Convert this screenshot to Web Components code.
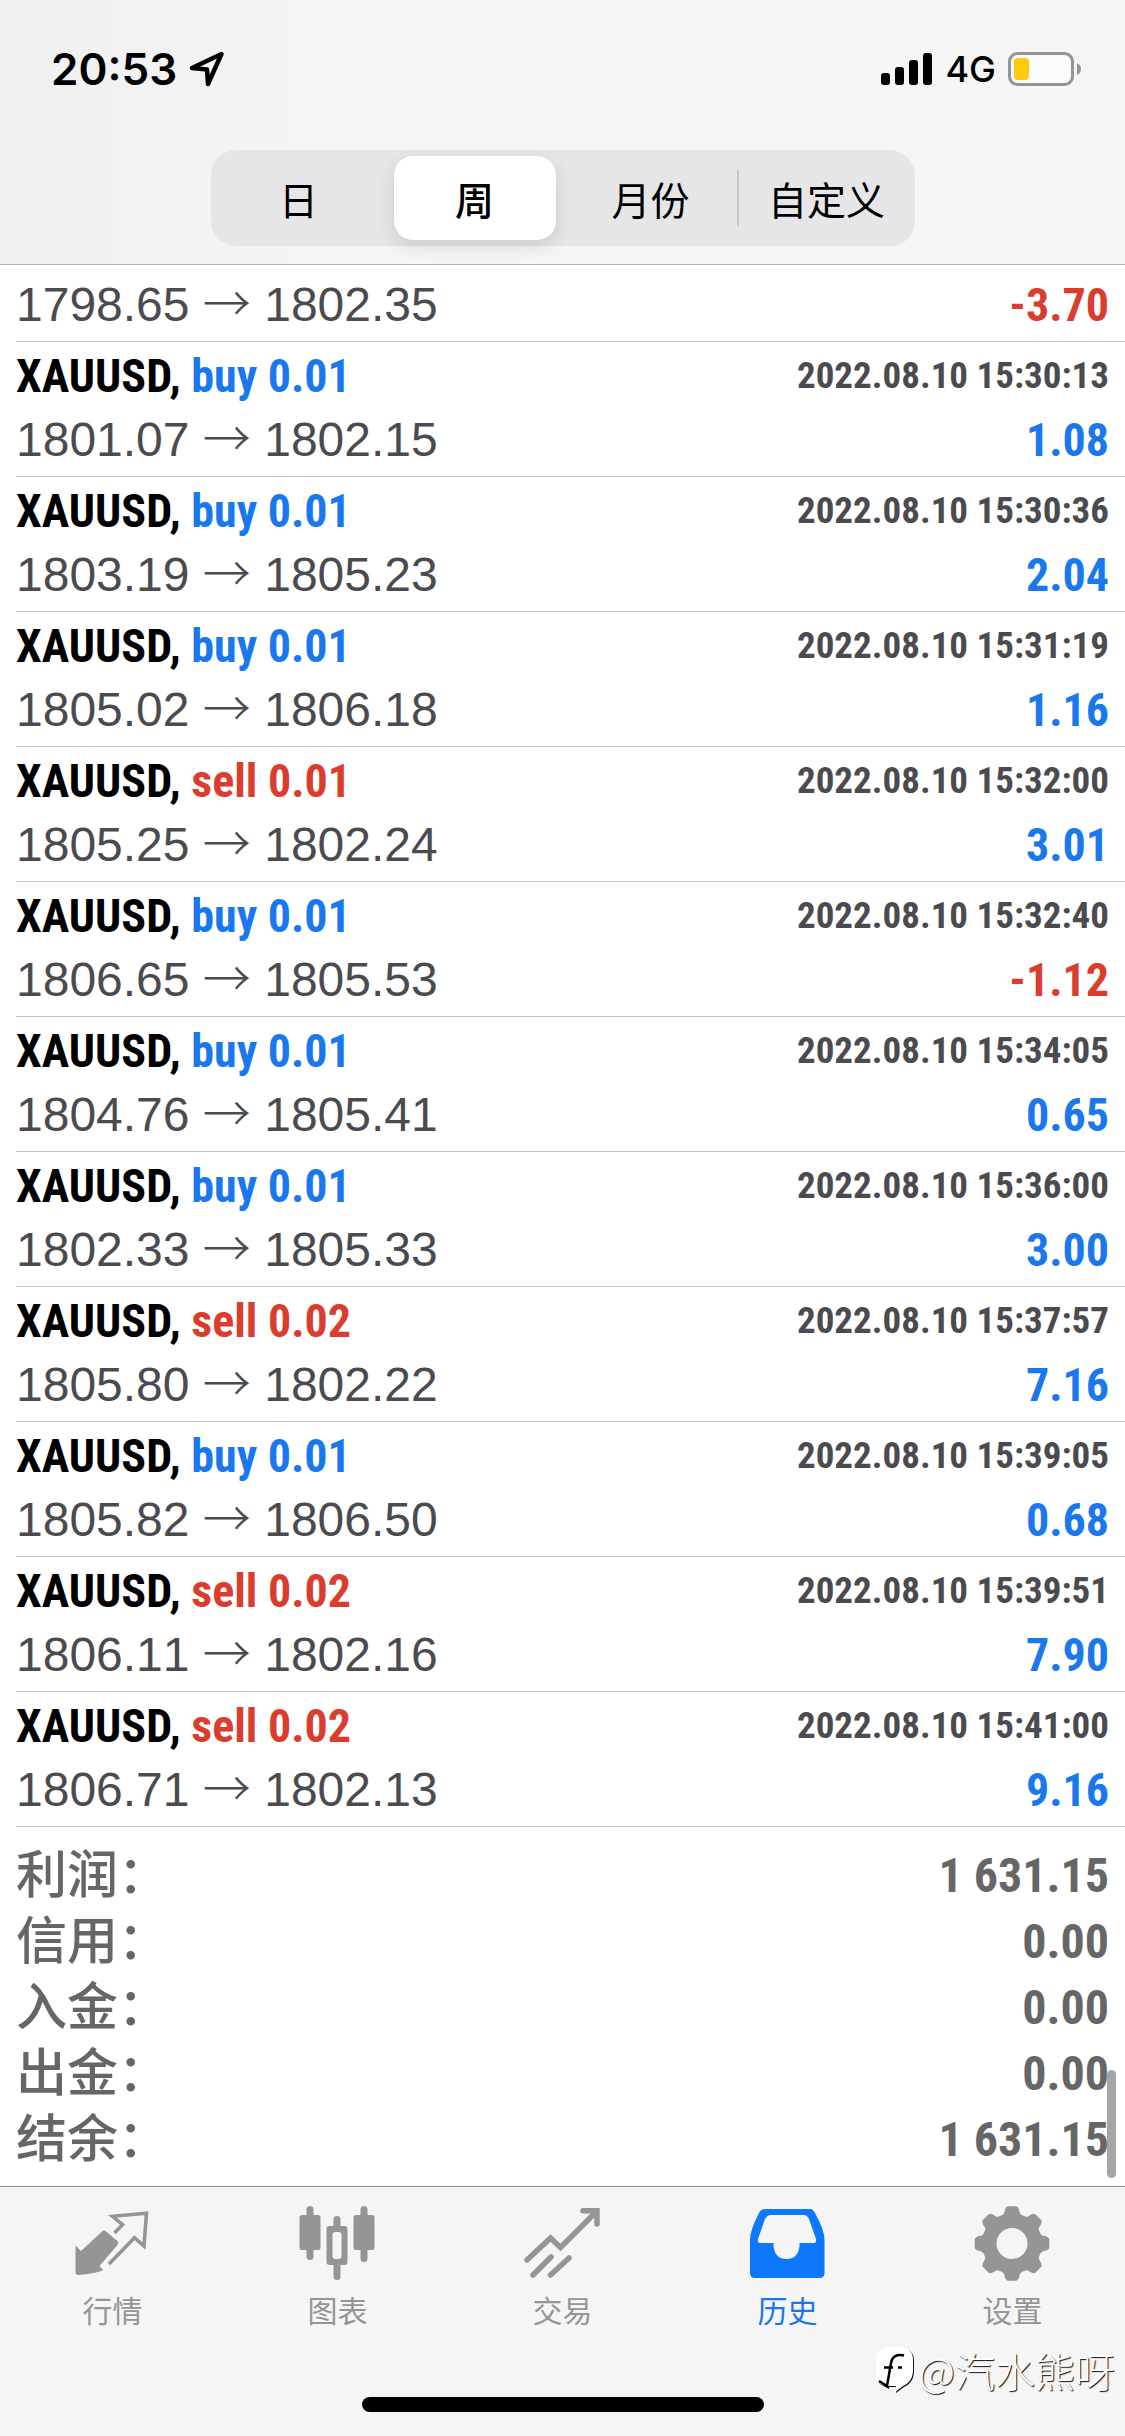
<!DOCTYPE html>
<html lang="zh-CN">
<head>
<meta charset="utf-8">
<meta name="viewport" content="width=device-width, initial-scale=1">
<title>历史</title>
<style>
  html, body { margin: 0; height: 100%; background: #fff; }
  body { font-family: "Liberation Sans", "Noto Sans CJK SC", sans-serif; color: #4b4b4f; }
</style>
</head>
<body>
<history-screen></history-screen>
<script>
const define = (name, markup, setup) => customElements.define(name, class extends HTMLElement {
  constructor() {
    super();
    this.attachShadow({ mode: 'open' }).innerHTML = markup;
  }
  connectedCallback() { if (setup) setup(this, this.shadowRoot); }
});

define('status-bar', `
<style>
  :host { display: flex; justify-content: space-between; align-items: center; height: 54px; padding: 42px 43px 0 51px; color: #000; font-family: Inter, sans-serif; }
  .side { display: flex; align-items: center; }
  .time { font-size: 44px; line-height: 54px; font-weight: 600; }
  .net { font-size: 36px; line-height: 54px; font-weight: 500; margin: 0 12px; }
  svg { display: block; }
  .loc { margin-left: 12px; }
</style>
<div class="side"><span class="time">20:53</span>
  <svg class="loc" width="36" height="36" viewBox="0 0 36 36" fill="none" stroke="#000" stroke-width="4.500" stroke-linejoin="round"><path d="M32.500 3 L3 17 L18 18.500 L19 33 Z"/></svg>
</div>
<div class="side">
  <svg width="52" height="34" viewBox="0 0 52 34"><rect x="0" y="21" width="9" height="12" rx="3"/><rect x="14" y="15" width="9" height="18" rx="3"/><rect x="28" y="8" width="9" height="25" rx="3"/><rect x="42" y="1" width="9" height="32" rx="3"/></svg>
  <span class="net">4G</span>
  <svg width="74" height="34" viewBox="0 0 74 34"><rect x="1.500" y="1.500" width="63" height="31" rx="8" fill="#fbfbfb" stroke="#949494" stroke-width="3"/><rect x="6" y="6" width="15" height="22" rx="4" fill="#fecb0a"/><path d="M69 11 Q73 13 73 17 Q73 21 69 23 Z" fill="#949494"/></svg>
</div>`);

define('period-tabs', `
<style>
  :host { display: grid; grid-template-columns: repeat(4, 1fr); box-sizing: border-box; width: 704px; max-width: 100%; height: 96px; padding: 6px 0; border-radius: 25px; background: #e6e6e8; }
  button { all: unset; box-sizing: border-box; margin: 0 7px; border-radius: 19px; text-align: center; font-family: "Noto Sans CJK SC", sans-serif; font-size: 39px; line-height: 74px; color: #000; }
  button[aria-pressed="true"] { background: #fff; font-weight: 500; box-shadow: 0 6px 18px rgba(0,0,0,.12); }
  .cell { display: grid; }
  .cell.rule { background: linear-gradient(#c9c9cc, #c9c9cc) right center / 2px 56px no-repeat; }
</style>
<div class="cell"><button type="button" aria-pressed="false">日</button></div>
<div class="cell"><button type="button" aria-pressed="true">周</button></div>
<div class="cell rule"><button type="button" aria-pressed="false">月份</button></div>
<div class="cell"><button type="button" aria-pressed="false">自定义</button></div>`);

define('deal-row', `
<style>
  :host { display: flex; flex-direction: column; justify-content: flex-end; box-sizing: border-box; height: 135px; margin-left: 16px; padding: 0 16px 6px 0; border-bottom: 1px solid #c4c4c6; font-family: "Roboto Condensed", "Liberation Sans", sans-serif; }
  .line { display: flex; justify-content: space-between; align-items: center; }
  .top { line-height: 68px; }
  .bottom { line-height: 60px; }
  .name { font-size: 46px; font-weight: 700; color: #000; }
  .side { color: #1a78ee; }
  .side.sell { color: #da3d2e; }
  .time { font-size: 37px; font-weight: 700; color: #4b4b4f; }
  .prices { font-family: "Liberation Sans", sans-serif; font-size: 48px; font-kerning: none; color: #4b4b4f; }
  .arrow { font-family: "Noto Sans CJK SC", sans-serif; line-height: 1; font-weight: 300; }
  .profit { font-size: 46px; font-weight: 700; color: #1a78ee; }
  .profit.loss { color: #da3d2e; }
</style>
<div class="line top"><span class="name">XAUUSD, <span class="side"></span></span><time class="time"></time></div>
<div class="line bottom"><span class="prices"><span class="open"></span> <span class="arrow">→</span> <span class="close"></span></span><span class="profit"></span></div>`,
(host, root) => {
  const [side, time, open, close, profit] = host.getAttribute('deal').split('|');
  const q = s => root.querySelector(s);
  q('.side').textContent = side;
  q('.side').classList.toggle('sell', side.startsWith('sell'));
  q('.time').textContent = time ? '2022.08.10 ' + time : '';
  q('.open').textContent = open;
  q('.close').textContent = close;
  q('.profit').textContent = profit;
  q('.profit').classList.toggle('loss', profit.startsWith('-'));
  if (host.hasAttribute('partial')) { q('.top').remove(); }
});

define('summary-line', `
<style>
  :host { display: flex; justify-content: space-between; height: 66px; line-height: 66px; padding: 0 16px; color: #666; font-weight: 700; }
  .label { font-family: "Liberation Sans", "Noto Sans CJK SC", sans-serif; font-size: 51px; font-weight: 500; }
  .value { font-family: "Roboto Condensed", "Liberation Sans", sans-serif; font-size: 48px; }
</style>
<span class="label"><slot></slot></span><span class="value"><slot name="value"></slot></span>`);

define('tab-item', `
<style>
  :host { display: block; }
  a { display: flex; flex-direction: column; align-items: center; padding-top: 17px; color: #959595; text-decoration: none; font-family: "Noto Sans CJK SC", sans-serif; font-size: 30px; line-height: 42px; }
  :host([active]) a { color: #1a76ee; }
  ::slotted(svg) { display: block; width: 84px; height: 84px; }
</style>
<a href="#"><slot name="icon"></slot><span><slot></slot></span></a>`,
(host, root) => { if (host.hasAttribute('active')) root.querySelector('a').setAttribute('aria-current', 'page'); });

define('water-mark', `
<style>
  :host { display: flex; align-items: center; gap: 4px; color: #fff; font-family: "Noto Sans CJK SC", sans-serif; font-size: 40px; line-height: 56px; font-weight: 300; text-shadow: 1px 1px 1px #111; }
  svg { display: block; filter: drop-shadow(1px 1px 0 #111); }
</style>
<svg width="40" height="48" viewBox="0 0 40 48"><path d="M12 1 H26 Q38 2 38 14 V26 Q37 36 28 40 L20 46 L21 40 H14 Q2 40 1 30 V14 Q2 2 12 1 Z" fill="#fff"/><path d="M29 9.500 Q18 7 16 17 L12 40 L4 35" stroke="#000" stroke-width="2.500" fill="none"/><path d="M9 21.500 H18 M23 21.500 H27" stroke="#000" stroke-width="2.500"/></svg>
<span>@汽水熊呀</span>`);

define('history-screen', `
<style>
  :host { display: flex; flex-direction: column; min-height: 100%; position: relative; overflow: hidden; }
  header { box-sizing: border-box; height: 265px; background: linear-gradient(90deg, #f0f0f1, #f5f5f7 35%, #f5f5f6); border-bottom: 1px solid #b2b2b4; }
  period-tabs { margin: 54px auto 0; }
  main { flex: 1; position: relative; background: #fff; }
  deal-row[partial] { height: 77px; }
  .deals { display: flex; flex-direction: column; }
  .summary { padding-top: 16px; }
  .thumb { position: absolute; right: 9px; bottom: 8px; width: 9px; height: 108px; border-radius: 5px; background: rgba(110,110,110,.62); }
  nav { box-sizing: border-box; height: 250px; border-top: 1px solid #8e8e90; background: #f5f5f5; position: relative; }
  .tabs { display: grid; grid-template-columns: repeat(5, 1fr); }
  .home { position: absolute; left: 50%; bottom: 24px; width: 402px; height: 15px; margin-left: -201px; border-radius: 8px; background: #000; }
  water-mark { position: absolute; right: 10px; bottom: 38px; }
</style>
<header><status-bar></status-bar><period-tabs></period-tabs></header>
<main>
  <div class="deals"></div>
  <div class="summary">
    <summary-line>利润：<span slot="value">1 631.15</span></summary-line>
    <summary-line>信用：<span slot="value">0.00</span></summary-line>
    <summary-line>入金：<span slot="value">0.00</span></summary-line>
    <summary-line>出金：<span slot="value">0.00</span></summary-line>
    <summary-line>结余：<span slot="value">1 631.15</span></summary-line>
  </div>
  <div class="thumb"></div>
</main>
<nav>
  <div class="tabs">
    <tab-item><svg slot="icon" viewBox="0 0 84 84"><path d="M31 27.500 Q33 25.500 35 27.500 L46.500 37 Q48 39 46.500 41 L28.500 62 L32 66 Q28 69 8 71 Q4.500 71.500 4.500 68 V41.500 L10 47 Z" fill="#959595"/><path d="M43.500 29 L51.500 20.700 L41.500 12.300 L75.500 9.300 L73 42 L63.500 33.700 L38 60" fill="none" stroke="#959595" stroke-width="3.600"/></svg>行情</tab-item>
    <tab-item><svg slot="icon" viewBox="0 0 84 84" fill="#959595"><rect x="3.500" y="11" width="21" height="35" rx="2.500"/><rect x="10.500" y="2" width="7" height="54" rx="3.500"/><rect x="57.500" y="11" width="21" height="35" rx="2.500"/><rect x="64.500" y="2" width="7" height="56" rx="3.500"/><path fill-rule="evenodd" d="M30.500 25 Q30.500 22 33.500 22 H48.500 Q51.500 22 51.500 25 V58 Q51.500 61 48.500 61 H33.500 Q30.500 61 30.500 58 Z M36.500 31 V52 Q36.500 55 39.500 55 H42.500 Q45.500 55 45.500 52 V31 Q45.500 28 42.500 28 H39.500 Q36.500 28 36.500 31 Z"/><path d="M37.500 24 V15.500 Q37.500 12 41 12 Q44.500 12 44.500 15.500 V24 Z M37.500 60 V72.500 Q37.500 76 41 76 Q44.500 76 44.500 72.500 V60 Z"/></svg>图表</tab-item>
    <tab-item><svg slot="icon" viewBox="0 0 84 84" fill="none" stroke="#959595" stroke-width="5.500" stroke-linecap="round" stroke-linejoin="miter"><path d="M6 56 L29.500 34 L39.500 43.500 L75 8 M62 6.700 H76 V20 M12 71 L30 53 M29.500 71 L48 54"/></svg>交易</tab-item>
    <tab-item active><svg slot="icon" viewBox="0 0 84 84"><path fill="#0d78fb" fill-rule="evenodd" d="M19 5 H64 Q67 5 69 9 Q78.500 26 78.500 36 V69 Q78.500 74 73.500 74 H9 Q4 74 4 69 V36 Q4 26 13 9 Q15 5 19 5 Z M25 11 Q21 11 19 15 L12 35 Q11 39 15 39 H27.500 V42 Q29 55 40.500 55 Q52 55 53.500 42 V39 H67 Q71 39 70 35 L63 15 Q61 11 58 11 Z"/></svg>历史</tab-item>
    <tab-item><svg slot="icon" viewBox="0 0 84 84"><path id="gear" fill="#959595" fill-rule="evenodd"/></svg>设置</tab-item>
  </div>
  <div class="home"></div>
  <water-mark></water-mark>
</nav>`,
(host, root) => {
  const deals = [
    '||1798.65|1802.35|-3.70',
    'buy 0.01|15:30:13|1801.07|1802.15|1.08',
    'buy 0.01|15:30:36|1803.19|1805.23|2.04',
    'buy 0.01|15:31:19|1805.02|1806.18|1.16',
    'sell 0.01|15:32:00|1805.25|1802.24|3.01',
    'buy 0.01|15:32:40|1806.65|1805.53|-1.12',
    'buy 0.01|15:34:05|1804.76|1805.41|0.65',
    'buy 0.01|15:36:00|1802.33|1805.33|3.00',
    'sell 0.02|15:37:57|1805.80|1802.22|7.16',
    'buy 0.01|15:39:05|1805.82|1806.50|0.68',
    'sell 0.02|15:39:51|1806.11|1802.16|7.90',
    'sell 0.02|15:41:00|1806.71|1802.13|9.16'
  ];
  const list = root.querySelector('.deals');
  deals.forEach((deal, i) => {
    const row = document.createElement('deal-row');
    row.setAttribute('deal', deal);
    row.toggleAttribute('partial', i === 0);
    list.append(row);
  });
  // Eight-toothed gear outline with a round hole.
  let d = '';
  for (let k = 0; k < 8; k++) {
    const p = (a, r) => { const t = (k * 45 + a - 90) * Math.PI / 180; return (41 + r * Math.cos(t)).toFixed(1) + ' ' + (39.5 + r * Math.sin(t)).toFixed(1); };
    d += (k ? 'L' : 'M') + p(-20, 30) + 'Q' + p(-15, 30) + ' ' + p(-13, 33) + 'Q' + p(-10, 37.5) + ' ' + p(-6, 37.5) + 'L' + p(6, 37.5) + 'Q' + p(10, 37.5) + ' ' + p(13, 33) + 'Q' + p(15, 30) + ' ' + p(20, 30);
  }
  root.querySelector('#gear').setAttribute('d', d + 'Z M25.500 39.500 a15.500 15.500 0 1 0 31 0 a15.500 15.500 0 1 0 -31 0 Z');
});
</script>
</body>
</html>
